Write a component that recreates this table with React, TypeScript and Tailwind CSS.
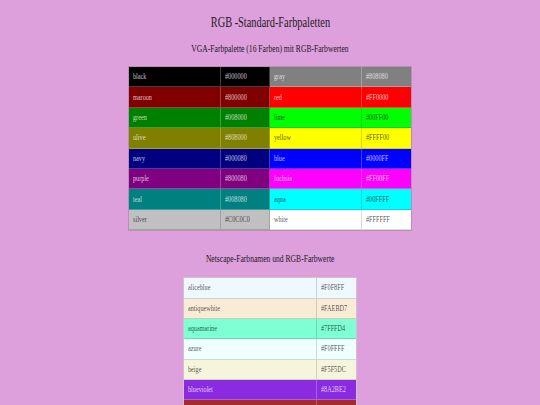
import React from 'react';

type Swatch = { name: string; hex: string; dark: boolean };

const vga: Swatch[][] = [
  [{ name: 'black', hex: '#000000', dark: true }, { name: 'gray', hex: '#808080', dark: true }],
  [{ name: 'maroon', hex: '#800000', dark: true }, { name: 'red', hex: '#FF0000', dark: true }],
  [{ name: 'green', hex: '#008000', dark: true }, { name: 'lime', hex: '#00FF00', dark: false }],
  [{ name: 'olive', hex: '#808000', dark: true }, { name: 'yellow', hex: '#FFFF00', dark: false }],
  [{ name: 'navy', hex: '#000080', dark: true }, { name: 'blue', hex: '#0000FF', dark: true }],
  [{ name: 'purple', hex: '#800080', dark: true }, { name: 'fuchsia', hex: '#FF00FF', dark: true }],
  [{ name: 'teal', hex: '#008080', dark: true }, { name: 'aqua', hex: '#00FFFF', dark: false }],
  [{ name: 'silver', hex: '#C0C0C0', dark: false }, { name: 'white', hex: '#FFFFFF', dark: false }],
];

const netscape: Swatch[] = [
  { name: 'aliceblue', hex: '#F0F8FF', dark: false },
  { name: 'antiquewhite', hex: '#FAEBD7', dark: false },
  { name: 'aquamarine', hex: '#7FFFD4', dark: false },
  { name: 'azure', hex: '#F0FFFF', dark: false },
  { name: 'beige', hex: '#F5F5DC', dark: false },
  { name: 'blueviolet', hex: '#8A2BE2', dark: true },
  { name: 'brown', hex: '#A52A2A', dark: true },
];

// the page text is narrow, so squeeze it horizontally
function Narrow({ children, center }: { children: React.ReactNode; center?: boolean }) {
  return (
    <span className={`inline-block whitespace-nowrap scale-x-[0.69] ${center ? 'origin-center' : 'origin-left'}`}>
      {children}
    </span>
  );
}

function Cell({ s, text, last }: { s: Swatch; text: string; last?: boolean }) {
  return (
    <div
      className={`h-[20.4px] flex items-center pl-[4px] text-[9px] leading-none overflow-hidden border-b ${last ? '' : 'border-r'} ${
        s.dark ? 'text-white/75 border-white/25' : 'text-black/70 border-black/15'
      }`}
      style={{ backgroundColor: s.hex }}
    >
      <Narrow>{text}</Narrow>
    </div>
  );
}

function App() {
  return (
    <div className="h-screen bg-[#DDA0DD] text-[#1a1a1a] font-['Liberation_Serif',serif] flex flex-col items-center overflow-hidden">
      <h1 className="mt-[13px] h-[18px] leading-[18px] text-[15px]">
        <Narrow center>RGB -Standard-Farbpaletten</Narrow>
      </h1>
      <h2 className="mt-[10px] h-[14px] leading-[14px] text-[11px]">
        <Narrow center>VGA-Farbpalette (16 Farben) mit RGB-Farbwerten</Narrow>
      </h2>

      {/* VGA table */}
      <div className="mt-[11px] grid grid-cols-[92px_49px_92px_49px] border border-[#b98fb9]">
        {vga.map((row) => (
          <React.Fragment key={row[0].name}>
            <Cell s={row[0]} text={row[0].name} />
            <Cell s={row[0]} text={row[0].hex} />
            <Cell s={row[1]} text={row[1].name} />
            <Cell s={row[1]} text={row[1].hex} last />
          </React.Fragment>
        ))}
      </div>

      <h3 className="mt-[20px] h-[14px] leading-[14px] text-[11px]">
        <Narrow center>Netscape-Farbnamen und RGB-Farbwerte</Narrow>
      </h3>

      {/* Netscape table */}
      <div className="mt-[12px] grid grid-cols-[133px_39px] border border-[#cfc2cf]">
        {netscape.map((s) => (
          <React.Fragment key={s.name}>
            <Cell s={s} text={s.name} />
            <Cell s={s} text={s.hex} last />
          </React.Fragment>
        ))}
      </div>
    </div>
  );
}

export default App;
